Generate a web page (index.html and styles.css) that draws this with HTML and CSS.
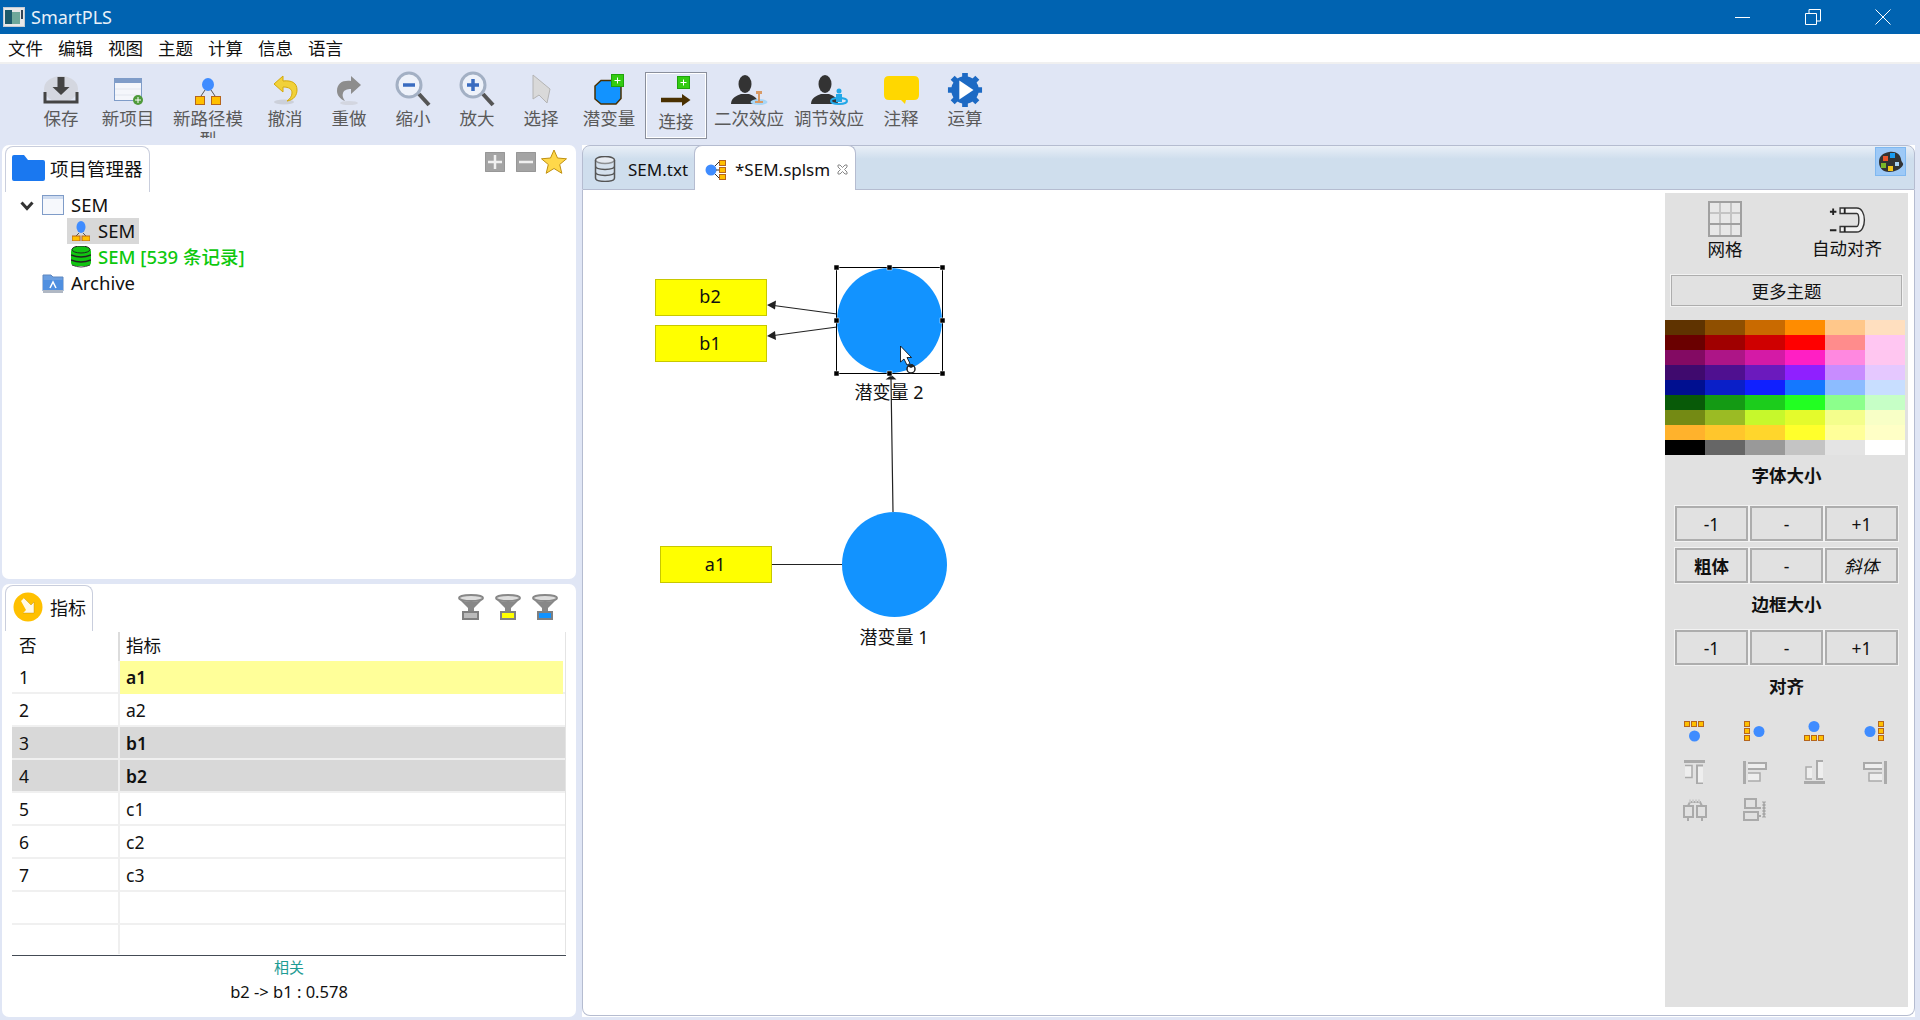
FILE: index.html
```html
<!DOCTYPE html>
<html lang="zh">
<head>
<meta charset="utf-8">
<title>SmartPLS</title>
<link rel="stylesheet" href="styles.css">
</head>
<body>
<header class="titlebar">
  <svg class="app-icon" width="22" height="20" viewBox="0 0 22 20"><rect x=".5" y=".5" width="21" height="19" fill="#e8e8e8" stroke="#c4ccd4"/><rect x="2" y="3" width="7" height="14" fill="#1c5a6a"/><rect x="9" y="5" width="8" height="12" fill="#6fa89a"/><rect x="18" y="3" width="2" height="9" fill="#345"/></svg>
  <span class="app-name">SmartPLS</span>
  <div class="win-btns">
    <svg width="16" height="16" viewBox="0 0 16 16"><path d="M0 8.500h15" stroke="#fff" fill="none"/></svg>
    <svg width="16" height="16" viewBox="0 0 16 16"><path d="M.5 4.500h11v11H.5zM4 4V.5h11.500V12H12" stroke="#fff" fill="none"/></svg>
    <svg width="16" height="16" viewBox="0 0 16 16"><path d="M.5.5l15 15M15.500.5l-15 15" stroke="#fff" fill="none"/></svg>
  </div>
</header>
<nav class="menu"><span>文件</span><span>编辑</span><span>视图</span><span>主题</span><span>计算</span><span>信息</span><span>语言</span></nav>
<div class="strip"></div>
<div class="toolbar">
  <div class="tool w64">
    <svg width="36" height="30" viewBox="0 0 36 30"><ellipse cx="18" cy="14" rx="17" ry="13" fill="#d4d7e0"/><path d="M14.500 2h7v10h5l-8.500 8-8.500-8h5z" fill="#444"/><path d="M2 17v10h32V17" fill="none" stroke="#444" stroke-width="3"/></svg>
    <span>保存</span></div>
  <div class="tool w70">
    <svg width="30" height="27" viewBox="0 0 30 27"><rect x="1.500" y=".5" width="27" height="22" fill="#f4f6fb" stroke="#7f9cc8"/><rect x="2" y="1" width="26" height="4" fill="#7f9cc8"/><path d="M2 11h26M2 17h26" stroke="#e2e6ee"/><circle cx="25" cy="22" r="5" fill="#4e9a3a"/><path d="M22 22h6M25 19v6" stroke="#fff"/></svg>
    <span>新项目</span></div>
  <div class="tool w90 clipmore">
    <svg width="26" height="27" viewBox="0 0 26 27"><ellipse cx="13" cy="6.500" rx="6" ry="6.500" fill="#3f8cff"/><path d="M10 12l-4 6M16 12l4 6" stroke="#555" fill="none"/><rect x=".5" y="18.500" width="9" height="8" fill="#ffc000" stroke="#b5651d"/><rect x="16.500" y="18.500" width="9" height="8" fill="#ffc000" stroke="#b5651d"/></svg>
    <span>新路径模<br>型</span></div>
  <div class="tool w64">
    <svg width="26" height="30" viewBox="0 0 26 30"><ellipse cx="12" cy="27" rx="10" ry="2.500" fill="#ccd0da"/><path d="M11 1L2 9l9 8v-5c6 0 9 2 9 6 0 3-2 6-5 8 7-1 10-6 10-11 0-7-5-10-14-9z" fill="#f1d139" stroke="#d4a90c"/></svg>
    <span>撤消</span></div>
  <div class="tool w64">
    <svg width="26" height="30" viewBox="0 0 26 30"><ellipse cx="13" cy="28" rx="9" ry="2" fill="#d3d6e0"/><path d="M15 1l10 9-10 9v-5c-4 0-7 1-8 4-1 3 0 5 2 8-5-2-8-6-8-10 0-8 6-11 14-10z" fill="#8d8d8d"/></svg>
    <span>重做</span></div>
  <div class="tool w64">
    <svg class="low" width="36" height="36" viewBox="0 0 36 36"><circle cx="14" cy="14" r="12" fill="#eef2fa" stroke="#a3b0c4" stroke-width="3"/><path d="M8 14h12" stroke="#3a6cc0" stroke-width="3.500"/><path d="M24 23l10 11" stroke="#555" stroke-width="4"/></svg>
    <span>缩小</span></div>
  <div class="tool w64">
    <svg class="low" width="36" height="36" viewBox="0 0 36 36"><circle cx="14" cy="14" r="12" fill="#eef2fa" stroke="#a3b0c4" stroke-width="3"/><path d="M8 14h12M14 8v12" stroke="#3a6cc0" stroke-width="3.500"/><path d="M24 23l10 11" stroke="#555" stroke-width="4"/></svg>
    <span>放大</span></div>
  <div class="tool w64">
    <svg width="20" height="31" viewBox="0 0 20 31"><path d="M2 1v24l6-4 8 8 3-14z" fill="#d9d9d9" stroke="#b4b4b4"/></svg>
    <span>选择</span></div>
  <div class="tool w72">
    <svg width="31" height="31" viewBox="0 0 31 31"><path d="M7 6.500h12l8 6v12l-5 5.500H7l-6-5V12z" fill="#1293ff" stroke="#4a3000" stroke-width="1.500"/><rect x="17.500" y=".5" width="12" height="12" fill="#33cc11" stroke="#1ea30a"/><path d="M20.500 6.500h6M23.500 3.500v6" stroke="#fff"/></svg>
    <span>潜变量</span></div>
  <div class="tool active">
    <svg width="30" height="31" viewBox="0 0 30 31"><rect x="16.500" y=".5" width="12" height="12" fill="#33cc11" stroke="#1ea30a"/><path d="M19.500 6.500h6M22.500 3.500v6" stroke="#fff"/><path d="M0 24h22" stroke="#4a3000" stroke-width="4.500"/><path d="M21 18l8.500 6-8.500 6z" fill="#4a3000"/></svg>
    <span>连接</span></div>
  <div class="tool w84">
    <svg width="37" height="30" viewBox="0 0 37 30"><ellipse cx="14" cy="9" rx="6.500" ry="9" fill="#333"/><path d="M0 29c0-6 5-8 10-10h8c5 2 9 4 9 10z" fill="#333"/><ellipse cx="28" cy="27" rx="8.500" ry="3" fill="#a8d6f6"/><path d="M25 16h6v3h-2v7h3v2h-8v-2h3v-7h-2z" fill="#d89a66"/></svg>
    <span>二次效应</span></div>
  <div class="tool w76">
    <svg width="37" height="30" viewBox="0 0 37 30"><ellipse cx="14" cy="9" rx="6.500" ry="9" fill="#333"/><path d="M0 29c0-6 5-8 10-10h8c5 2 9 4 9 10z" fill="#333"/><ellipse cx="28" cy="26" rx="8" ry="3" fill="none" stroke="#22a8e8" stroke-width="2"/><circle cx="28" cy="16" r="2.500" fill="#22a8e8"/><path d="M25 19h6v8h-6z" fill="#22a8e8"/></svg>
    <span>调节效应</span></div>
  <div class="tool w68">
    <svg width="37" height="30" viewBox="0 0 37 30"><path d="M6 1h25q5 0 5 5v14q0 5-5 5h-8l-1 4-4-4H6q-5 0-5-5V6q0-5 5-5z" fill="#ffd700"/></svg>
    <span>注释</span></div>
  <div class="tool w60">
    <svg class="gear" width="36" height="36" viewBox="0 0 38 38"><circle cx="19" cy="19" r="14.500" fill="#1d6ac4"/><path d="M19 1v6M19 31v6M1 19h6M31 19h6M6 6l4 4M28 28l4 4M32 6l-4 4M10 28l-4 4" stroke="#1d6ac4" stroke-width="6"/><path d="M13 9l15 10-15 10z" fill="#fff"/></svg>
    <span>运算</span></div>
</div>

<main class="main">
  <div class="left">
    <section class="panel project">
      <div class="panel-head">
        <div class="view-tab big">
          <svg width="33" height="26" viewBox="0 0 33 26"><path d="M0 2q0-2 2-2h10l4 5h15q2 0 2 2v17q0 2-2 2H2q-2 0-2-2z" fill="#1a78f0"/></svg>
          <span>项目管理器</span>
        </div>
        <div class="head-actions pm">
          <svg width="20" height="20" viewBox="0 0 20 20"><rect width="20" height="20" rx="2" fill="#a4a4a4" stroke="#8a8a8a"/><path d="M3 10h14M10 3v14" stroke="#f0f0f0" stroke-width="2.500"/></svg>
          <svg width="20" height="20" viewBox="0 0 20 20"><rect width="20" height="20" rx="2" fill="#a4a4a4" stroke="#8a8a8a"/><path d="M3 10h14" stroke="#f0f0f0" stroke-width="2.500"/></svg>
          <svg width="26" height="26" viewBox="0 0 26 26"><path d="M13 1l3.500 8 9 .8-6.800 5.700 2.100 8.800L13 19.500l-7.800 4.800 2.100-8.800L.5 9.800l9-.8z" fill="#ffd84a" stroke="#c09010"/></svg>
        </div>
      </div>
      <ul class="tree">
        <li class="tree-row"><svg class="chev" width="14" height="10" viewBox="0 0 14 10"><path d="M1.500 1.500L7 7.500l5.500-6" fill="none" stroke="#333" stroke-width="3"/></svg>
          <svg width="22" height="20" viewBox="0 0 22 20"><rect x=".5" y=".5" width="21" height="19" fill="#f6f8fc" stroke="#7f9cc8"/><rect x="1" y="1" width="20" height="3" fill="#cfdcf0"/></svg><span>SEM</span></li>
        <li class="tree-row sub"><div class="selected"><svg width="18" height="20" viewBox="0 0 18 20"><ellipse cx="9" cy="6" rx="4.500" ry="6" fill="#3f8cff"/><path d="M7 12l-3 3M11 12l3 3" stroke="#555"/><rect x="0" y="15" width="8" height="5" fill="#ffc000" stroke="#b5651d"/><rect x="10" y="15" width="8" height="5" fill="#ffc000" stroke="#b5651d"/></svg><span>SEM</span></div></li>
        <li class="tree-row sub data"><svg width="20" height="22" viewBox="0 0 20 22"><rect y="2" width="20" height="18" rx="4" fill="#11c411"/><ellipse cx="10" cy="3.500" rx="9" ry="3.500" fill="#11c411" stroke="#222"/><path d="M0 9q10 4 20 0M0 14q10 4 20 0" stroke="#222" stroke-width="1.500" fill="none"/><path d="M1 19q9 4 18 0" stroke="#444" fill="none"/></svg><span>SEM [539 条记录]</span></li>
        <li class="tree-row"><svg width="22" height="20" viewBox="0 0 22 20"><path d="M1 2h8l2 2h10v14H1z" fill="#6a9ee0" stroke="#5f87bf"/><rect x="1" y="7" width="20" height="10" fill="#4f8fe0"/><rect x="1" y="17" width="20" height="3" fill="#b0b8c4"/><path d="M8 15l3-6 3 6" stroke="#fff" fill="none" stroke-width="1.500"/></svg><span>Archive</span></li>
      </ul>
    </section>
    <section class="panel indicators">
      <div class="panel-head short">
        <div class="view-tab small">
          <svg width="30" height="30" viewBox="0 0 30 30"><circle cx="15" cy="15" r="14.500" fill="#ffc000"/><path d="M8 9l3-3 7 7 3-3v11H10l3-3z" fill="#fff" fill-opacity=".9"/><path d="M11 6l7 7 3-3v11H10" fill="none" stroke="#b8860b" stroke-opacity=".4"/></svg>
          <span>指标</span>
        </div>
        <div class="head-actions funnels">
          <svg width="26" height="26" viewBox="0 0 26 26"><ellipse cx="13" cy="4" rx="12" ry="3" fill="#ddd" stroke="#888" stroke-width="2"/><path d="M2 6l8 8v3h6v-3l8-8q-11 4-22 0z" fill="#888"/><rect x="4" y="17" width="17" height="9" fill="#808080"/><rect x="6" y="19" width="13" height="5" fill="#bbb"/></svg>
          <svg width="26" height="26" viewBox="0 0 26 26"><ellipse cx="13" cy="4" rx="12" ry="3" fill="#ddd" stroke="#888" stroke-width="2"/><path d="M2 6l8 8v3h6v-3l8-8q-11 4-22 0z" fill="#888"/><rect x="5" y="17" width="16" height="9" fill="#808080"/><rect x="7" y="19" width="12" height="5" fill="#ff0"/></svg>
          <svg width="26" height="26" viewBox="0 0 26 26"><ellipse cx="13" cy="4" rx="12" ry="3" fill="#ddd" stroke="#888" stroke-width="2"/><path d="M2 6l8 8v3h6v-3l8-8q-11 4-22 0z" fill="#888"/><rect x="5" y="17" width="16" height="9" fill="#808080"/><rect x="7" y="19" width="12" height="5" fill="#1293ff"/></svg>
        </div>
      </div>
      <div class="table">
        <div class="row head"><div>否</div><div>指标</div></div>
        <div class="row"><div>1</div><div class="yellow">a1</div></div>
        <div class="row"><div>2</div><div>a2</div></div>
        <div class="row grey"><div>3</div><div class="bold">b1</div></div>
        <div class="row grey"><div>4</div><div class="bold">b2</div></div>
        <div class="row"><div>5</div><div>c1</div></div>
        <div class="row"><div>6</div><div>c2</div></div>
        <div class="row"><div>7</div><div>c3</div></div>
        <div class="row"><div></div><div></div></div>
        <div class="row last"><div></div><div></div></div>
      </div>
      <div class="corr">
        <div class="corr-title">相关</div>
        <div class="corr-val">b2 -&gt; b1 : 0.578</div>
      </div>
    </section>
  </div>

  <section class="editor">
    <div class="tabs">
      <div class="tab">
        <svg width="22" height="26" viewBox="0 0 22 26"><ellipse cx="11" cy="4" rx="9.500" ry="3.500" fill="#e8ecf2" stroke="#555" stroke-width="1.500"/><path d="M1.500 4v18c0 4.500 19 4.500 19 0V4M1.500 10c0 4.500 19 4.500 19 0M1.500 16c0 4.500 19 4.500 19 0" fill="#dfe5ee" fill-opacity=".4" stroke="#555" stroke-width="1.500"/></svg>
        <span>SEM.txt</span>
      </div>
      <div class="tab on">
        <svg width="21" height="20" viewBox="0 0 21 20"><circle cx="6" cy="10" r="5.500" fill="#3f8cff"/><path d="M10 6l4-4M11 10h3M10 14l4 4" stroke="#333"/><rect x="14.500" y=".5" width="6" height="5" fill="#ffc000" stroke="#b5651d"/><rect x="14.500" y="7.500" width="6" height="5" fill="#ffc000" stroke="#b5651d"/><rect x="14.500" y="14.500" width="6" height="5" fill="#ffc000" stroke="#b5651d"/></svg>
        <span>*SEM.splsm</span>
        <svg class="close" width="11" height="11" viewBox="0 0 11 11"><path d="M1 1h2l2.500 2.500L8 1h2v2L7.500 5.500 10 8v2H8L5.500 7.500 3 10H1V8l2.500-2.500L1 3z" fill="#fff" stroke="#888"/></svg>
      </div>
      <div class="palette-btn">
        <svg width="26" height="22" viewBox="0 0 26 22"><path d="M11 1c7-1 11 2 12 7 0 3 3 4 2 6-2 4-8 7-14 7C5 21 1 17 1 11 1 5 5 2 11 1z" fill="#333"/><rect x="5" y="5" width="5" height="5" fill="#e8542a"/><rect x="12" y="2" width="5" height="5" fill="#1a9cf0"/><rect x="3" y="12" width="5" height="5" fill="#7ab828"/><rect x="10" y="15" width="5" height="5" fill="#f5c518"/><rect x="17" y="11" width="4" height="4" fill="#a8d0f0"/></svg>
      </div>
    </div>
    <div class="canvas-wrap">
      <div class="diagram">
        <svg class="model" width="1080" height="820" viewBox="583 190 1080 820">
          <path d="M837 314L770 305M837 327L770 336M893 512L891 379M772 564.500H842" stroke="#222" stroke-width="1.200" fill="none"/>
          <path d="M767 305l9-4.500-1 9zM767 336l8-5 1 9zM891.500 375l5 4.500h-11z" fill="#222"/>
          <g class="ind"><rect x="655.500" y="279.500" width="111" height="36"/><rect x="655.500" y="325.500" width="111" height="36"/><rect x="660.500" y="546.500" width="111" height="36"/></g>
          <circle cx="889.500" cy="320.500" r="52.500" fill="#1293ff"/>
          <circle cx="894.500" cy="564.500" r="52.500" fill="#1293ff"/>
          <text x="710" y="303" class="node-t">b2</text>
          <text x="710" y="350" class="node-t">b1</text>
          <text x="715" y="571" class="node-t">a1</text>
          <text x="889" y="399" class="node-t">潜变量 2</text>
          <text x="894" y="644" class="node-t">潜变量 1</text>
          <rect x="836.500" y="267.500" width="106" height="106" fill="none" stroke="#000" stroke-width="1"/>
          <g class="handles"><rect x="834" y="265" width="5" height="5"/><rect x="887" y="265" width="5" height="5"/><rect x="940" y="265" width="5" height="5"/><rect x="834" y="318" width="5" height="5"/><rect x="940" y="318" width="5" height="5"/><rect x="834" y="371" width="5" height="5"/><rect x="887" y="371" width="5" height="5"/><rect x="940" y="371" width="5" height="5"/></g>
          <path d="M900.500 346v16l3.500-3 3 6 3-1.500-3-6h4.500z" fill="#fff" stroke="#000" stroke-width=".8"/>
          <circle cx="911" cy="369" r="4" fill="#fff" stroke="#222" stroke-width="1.500"/><path d="M907 366l5-2 3 2-4 2z" fill="#222"/>
        </svg>
      </div>
      <aside class="side">
        <div class="side-top">
          <div class="side-tool">
            <svg width="34" height="36" viewBox="0 0 34 36"><rect x="1" y="1" width="32" height="34" fill="#e8e8e8" stroke="#a0a0a0" stroke-width="2"/><path d="M12 2v32M23 2v32M2 12h30" stroke="#c4c4c4" stroke-width="2"/><path d="M2 23h30" stroke="#a0a0a0" stroke-width="2"/></svg>
            <span>网格</span></div>
          <div class="side-tool">
            <svg width="37" height="31" viewBox="0 0 40 31"><path d="M1 6h7M4.500 2.500v7M1 26h7" stroke="#222" stroke-width="2"/><path d="M12 2h18c11 0 11 26 0 26H12v-6h18c3 0 3-14 0-14H12z" fill="#f2f2f2" stroke="#333" stroke-width="1.500"/><path d="M17 2v6M17 22v6" stroke="#222" stroke-width="2"/></svg>
            <span>自动对齐</span></div>
        </div>
        <button class="more">更多主题</button>
        <svg class="swatches" width="240" height="135" viewBox="0 0 240 135">
          <g><rect width="40" height="15" fill="#5f3300"/><rect x="40" width="40" height="15" fill="#8f4f00"/><rect x="80" width="40" height="15" fill="#c96a00"/><rect x="120" width="40" height="15" fill="#ff8c00"/><rect x="160" width="40" height="15" fill="#ffc78a"/><rect x="200" width="40" height="15" fill="#ffdfbf"/></g>
          <g transform="translate(0 15)"><rect width="40" height="15" fill="#6a0000"/><rect x="40" width="40" height="15" fill="#a00000"/><rect x="80" width="40" height="15" fill="#cf0000"/><rect x="120" width="40" height="15" fill="#ff0000"/><rect x="160" width="40" height="15" fill="#ff8c8c"/><rect x="200" width="40" height="15" fill="#ffc6f2"/></g>
          <g transform="translate(0 30)"><rect width="40" height="15" fill="#830a63"/><rect x="40" width="40" height="15" fill="#ad1587"/><rect x="80" width="40" height="15" fill="#d41aa6"/><rect x="120" width="40" height="15" fill="#ff1fc4"/><rect x="160" width="40" height="15" fill="#ff88e0"/><rect x="200" width="40" height="15" fill="#ffc6f0"/></g>
          <g transform="translate(0 45)"><rect width="40" height="15" fill="#3f0a6e"/><rect x="40" width="40" height="15" fill="#4f1090"/><rect x="80" width="40" height="15" fill="#6b1abd"/><rect x="120" width="40" height="15" fill="#8f20ff"/><rect x="160" width="40" height="15" fill="#c88cff"/><rect x="200" width="40" height="15" fill="#e5c8ff"/></g>
          <g transform="translate(0 60)"><rect width="40" height="15" fill="#000f90"/><rect x="40" width="40" height="15" fill="#0a1fc8"/><rect x="80" width="40" height="15" fill="#1020ff"/><rect x="120" width="40" height="15" fill="#1478ff"/><rect x="160" width="40" height="15" fill="#8cbcff"/><rect x="200" width="40" height="15" fill="#c8deff"/></g>
          <g transform="translate(0 75)"><rect width="40" height="15" fill="#085a08"/><rect x="40" width="40" height="15" fill="#149a14"/><rect x="80" width="40" height="15" fill="#1ccc1c"/><rect x="120" width="40" height="15" fill="#22ff22"/><rect x="160" width="40" height="15" fill="#8cff8c"/><rect x="200" width="40" height="15" fill="#c6ffc6"/></g>
          <g transform="translate(0 90)"><rect width="40" height="15" fill="#748a14"/><rect x="40" width="40" height="15" fill="#9bbb24"/><rect x="80" width="40" height="15" fill="#c6f82c"/><rect x="120" width="40" height="15" fill="#e4fb2c"/><rect x="160" width="40" height="15" fill="#f4fe8c"/><rect x="200" width="40" height="15" fill="#f8ffc6"/></g>
          <g transform="translate(0 105)"><rect width="40" height="15" fill="#ffb22c"/><rect x="40" width="40" height="15" fill="#ffc62c"/><rect x="80" width="40" height="15" fill="#ffd62c"/><rect x="120" width="40" height="15" fill="#ffff2c"/><rect x="160" width="40" height="15" fill="#ffff99"/><rect x="200" width="40" height="15" fill="#ffffc6"/></g>
          <g transform="translate(0 120)"><rect width="40" height="15" fill="#000"/><rect x="40" width="40" height="15" fill="#666"/><rect x="80" width="40" height="15" fill="#999"/><rect x="120" width="40" height="15" fill="#c4c4c4"/><rect x="160" width="40" height="15" fill="#e4e4e4"/><rect x="200" width="40" height="15" fill="#fff"/></g>
        </svg>
        <h3 class="h-font">字体大小</h3>
        <div class="btn-row"><button>-1</button><button>-</button><button>+1</button></div>
        <div class="btn-row second"><button class="b">粗体</button><button>-</button><button class="i">斜体</button></div>
        <h3 class="h-border">边框大小</h3>
        <div class="btn-row"><button>-1</button><button>-</button><button>+1</button></div>
        <h3 class="h-align">对齐</h3>
        <div class="align-grid">
          <svg width="21" height="21" viewBox="0 0 21 21"><g class="sq"><rect x=".5" y=".5" width="5" height="5"/><rect x="7.500" y=".5" width="5" height="5"/><rect x="14.500" y=".5" width="5" height="5"/></g><circle cx="10.500" cy="15" r="5.500" fill="#3f8cff"/></svg>
          <svg width="21" height="21" viewBox="0 0 21 21"><g class="sq"><rect x=".5" y=".5" width="5" height="5"/><rect x=".5" y="7.500" width="5" height="5"/><rect x=".5" y="14.500" width="5" height="5"/></g><circle cx="15" cy="10.500" r="5.500" fill="#3f8cff"/></svg>
          <svg width="21" height="21" viewBox="0 0 21 21"><g class="sq"><rect x=".5" y="14.500" width="5" height="5"/><rect x="7.500" y="14.500" width="5" height="5"/><rect x="14.500" y="14.500" width="5" height="5"/></g><circle cx="10" cy="5.500" r="5.500" fill="#3f8cff"/></svg>
          <svg width="21" height="21" viewBox="0 0 21 21"><g class="sq"><rect x="14.500" y=".5" width="5" height="5"/><rect x="14.500" y="7.500" width="5" height="5"/><rect x="14.500" y="14.500" width="5" height="5"/></g><circle cx="6" cy="10.500" r="5.500" fill="#3f8cff"/></svg>
          <svg class="al2" width="24" height="24" viewBox="0 0 24 24"><path d="M1 1.500h21" stroke="#aaa" stroke-width="3"/><path d="M2 5.500h7v12H2" fill="#eee" stroke="#aaa" stroke-width="1.500"/><path d="M20 5.500h-6v18h6" fill="#eee" stroke="#aaa" stroke-width="2"/></svg>
          <svg class="al2" width="24" height="24" viewBox="0 0 24 24"><path d="M1.500 1v23" stroke="#aaa" stroke-width="3"/><path d="M5 3h18v6H5" fill="#eee" stroke="#aaa" stroke-width="2"/><path d="M5 13h12v8H5" fill="#eee" stroke="#aaa" stroke-width="1.500"/></svg>
          <svg class="al2" width="24" height="24" viewBox="0 0 24 24"><path d="M1 22.500h21" stroke="#aaa" stroke-width="3"/><path d="M9 7H3v12h6" fill="#eee" stroke="#aaa" stroke-width="1.500"/><path d="M20 1h-6v18h6" fill="#eee" stroke="#aaa" stroke-width="2"/></svg>
          <svg class="al2" width="24" height="24" viewBox="0 0 24 24"><path d="M22.500 1v23" stroke="#aaa" stroke-width="3"/><path d="M19 3H1v6h18" fill="#eee" stroke="#aaa" stroke-width="2"/><path d="M19 13H6v8h13" fill="#eee" stroke="#aaa" stroke-width="1.500"/></svg>
          <svg class="al3" width="24" height="24" viewBox="0 0 24 24"><path d="M1 8h9v11H1zM14 8h9v11h-9zM5 19v4M19 19v4M5 8l2-4h10l2 4" fill="none" stroke="#aaa" stroke-width="2"/><path d="M6 3h12" stroke="#ccc" stroke-width="3" stroke-dasharray="2 1"/></svg>
          <svg class="al3" width="24" height="24" viewBox="0 0 24 24"><path d="M2 1h11v9H2zM1 14h14v8H1zM13 10h5M15 18h3" fill="none" stroke="#aaa" stroke-width="2"/><path d="M21 3v17" stroke="#c4c4c4" stroke-width="4" stroke-dasharray="2 1"/><path d="M21 4v15" stroke="#888"/></svg>
        </div>
      </aside>
    </div>
  </section>
</main>
</body>
</html>
```
FILE: styles.css
```css
* { box-sizing: border-box; }
html, body { margin: 0; height: 1020px; overflow: hidden; }
body {
  background: #e0e6f5;
  display: flex;
  flex-direction: column;
  font-family: "Noto Sans", "Noto Sans CJK SC", sans-serif;
  font-size: 17.5px;
  color: #111;
}
svg { display: block; flex: none; }

.titlebar { height: 34px; background: #0063b1; display: flex; align-items: center; color: #fff; padding-left: 3px; }
.app-name { margin-left: 6px; font-size: 18px; color: #e8f0f8; }
.win-btns { margin-left: auto; display: flex; gap: 54px; padding-right: 29px; }
.app-icon { margin-top: -1px; }

.menu { height: 28px; background: #fff; display: flex; align-items: center; gap: 15px; padding-left: 8px; line-height: 30px; }
.strip { height: 2px; background: #f0f0f0; }

.toolbar { height: 81px; display: flex; padding-left: 29px; color: #555; position: relative; }
.tool { display: grid; grid-template-rows: 41px 23px; row-gap: 2px; justify-items: center; height: 74px; overflow: hidden; text-align: center; line-height: 23px; }
.tool svg { align-self: end; }
.tool svg.low { margin-bottom: -2px; }
.tool svg.gear { margin-bottom: -3px; }
.tool span { display: block; white-space: nowrap; color: #5a5a5a; }
.w60 { width: 60px; } .w64 { width: 64px; } .w68 { width: 68px; } .w70 { width: 70px; }
.w72 { width: 72px; } .w76 { width: 76px; } .w84 { width: 84px; } .w90 { width: 90px; }
.clipmore span { line-height: 21px; padding-top: 1px; }
.tool.active { width: 62px; margin-top: 8px; height: 67px; border: 1px solid #8a8f9c; outline: 1px solid #fff; outline-offset: -2px; grid-template-rows: 34px 23px; row-gap: 3px; }

.main { flex: 1; display: flex; gap: 6px; padding: 0 0 3px 2px; min-height: 0; }
.left { width: 574px; display: flex; flex-direction: column; gap: 5px; }
.panel { background: #fff; border-radius: 7px; display: flex; flex-direction: column; position: relative; }
.project { height: 434px; }
.indicators { flex: 1; min-height: 0; }

.panel-head { display: flex; height: 45px; padding-left: 3px; }
.panel-head.short { height: 48px; padding-top: 1px; }
.view-tab { display: flex; align-items: center; border: 1px solid #c9cedd; border-bottom: 0; border-radius: 8px 8px 0 0; background: #fff; padding-bottom: 4px; }
.view-tab.big { width: 145px; height: 46px; padding-left: 6px; gap: 5px; font-size: 18.5px; margin-top: 1px; }
.view-tab.small { width: 88px; height: 46px; padding-left: 7px; gap: 7px; font-size: 18px; }
.head-actions { margin-left: auto; display: flex; }
.pm { gap: 11px; padding: 7px 9px 0 0; }
.pm svg:last-child { margin: -3px 0 0 -6px; }
.funnels { gap: 11px; padding: 9px 18px 0 0; }

.tree { list-style: none; margin: 0; padding: 2px 0 0; font-size: 18.5px; }
.tree-row { display: flex; align-items: center; height: 26px; padding-left: 40px; gap: 7px; position: relative; }
.tree-row .chev { position: absolute; left: 18px; top: 9px; }
.tree-row.sub { padding-left: 69px; }
.selected { display: flex; align-items: center; gap: 8px; background: #d8d8d8; height: 26px; width: 72px; padding-left: 5px; margin-left: -4px; }
.data { color: #0dc80d; font-weight: 500; gap: 7px; }
.tree-row span { line-height: 26px; }

.table { margin: 0 10px; width: 554px; border-right: 1px solid #e4e4e4; height: 322px; overflow: hidden; }
.row { display: grid; grid-template-columns: 106px 1fr; height: 33px; border-bottom: 2px solid #f0f0f0; line-height: 33px; }
.row > div { padding-left: 7px; }
.row > div:last-child { border-left: 2px solid #efefef; padding-left: 6px; }
.row.head { height: 29px; border-bottom: 0; line-height: 27px; }
.row.head > div:last-child { border-left-color: #dcdcdc; }
.row > div.yellow { background: #ffff99; font-weight: 600; margin-right: 2px; }
.grey { background: #d8d8d8; }
.bold { font-weight: 600; }
.corr { margin: 1px 10px 0; width: 554px; border-top: 1px solid #444b55; text-align: center; }
.corr-title { font-size: 15px; color: #1f9c94; line-height: 22px; }
.corr-val { font-size: 16.500px; line-height: 28px; }

.editor { flex: 1; background: #fff; display: flex; flex-direction: column; min-width: 0; border-right: 5px solid #e0e6f5; }
.tabs { height: 45px; display: flex; align-items: flex-end; position: relative; border: 1px solid #b5bcd0; border-radius: 8px 8px 0 0; background: linear-gradient(#e9eff7, #cfdeed 30%); font-size: 17px; }
.tab { display: flex; align-items: center; height: 43px; width: 111px; padding-left: 11px; padding-top: 3px; gap: 12px; }
.tab.on { background: #fff; width: 162px; border: 1px solid #b5bcd0; border-bottom: 0; border-radius: 8px 8px 0 0; height: 45px; margin-bottom: -1px; gap: 9px; padding-left: 10px; }
.close { margin-left: -2px; }
.palette-btn { position: absolute; right: 8px; top: 1px; width: 31px; height: 29px; background: #9dc9f7; border: 1px solid #80b8f0; display: flex; align-items: center; justify-content: center; }
.canvas-wrap { flex: 1; display: flex; border: 1px solid #b5bcd0; border-top: 0; border-radius: 0 0 8px 8px; margin-bottom: 1px; padding: 3px 6px 8px 0; min-height: 0; }
.diagram { flex: 1; position: relative; margin-top: -3px; }
.model { position: absolute; left: 0; top: 0; }
.ind rect { fill: #ff0; stroke: #c8c800; }
.handles rect { fill: #000; stroke: #fff; stroke-width: .5; }
.node-t { font-size: 18px; text-anchor: middle; fill: #111; }

.side { width: 243px; background: #e1e1e1; display: flex; flex-direction: column; align-items: center; }
.side-top { display: flex; width: 100%; height: 82px; padding-top: 8px; }
.side-tool { display: flex; flex-direction: column; align-items: center; line-height: 22px; }
.side-tool:first-child { width: 122px; margin-left: -1px; }
.side-tool:last-child { width: 122px; padding-top: 4px; }
.side-tool svg { margin-bottom: 1px; }
button { font: inherit; color: #111; background: #e1e1e1; padding: 0; border: 2px solid #adadad; box-shadow: 0 0 0 1px #f2f2f2; }
.more { width: 231px; height: 31px; border-width: 1px; line-height: 26px; }
.swatches { margin: 14px 3px 0 0; }
.side h3 { margin: 0; font-size: 17.5px; font-weight: 600; line-height: 24px; text-align: center; }
.h-font { padding-top: 8px; height: 42px; }
.h-border { padding-top: 9px; height: 38px; }
.h-align { margin-top: 1px !important; height: 32px; padding-top: 8px; }
.btn-row { display: grid; grid-template-columns: repeat(3, 73px); gap: 2px; padding-top: 9px; }
.btn-row button { height: 35px; line-height: 30px; }
.btn-row.second { padding-top: 7px; }
.second button { line-height: 28px; }
.b { font-weight: 700; }
.i { font-style: italic; }
.align-grid { display: grid; grid-template-columns: repeat(4, 60px); justify-items: center; align-items: center; row-gap: 16px; margin-left: -4px; padding-top: 23px; }
.al2 { margin-top: 2px; }
.al3 { margin-top: -2px; }
.sq rect { fill: #ffc000; stroke: #b5651d; }
```
